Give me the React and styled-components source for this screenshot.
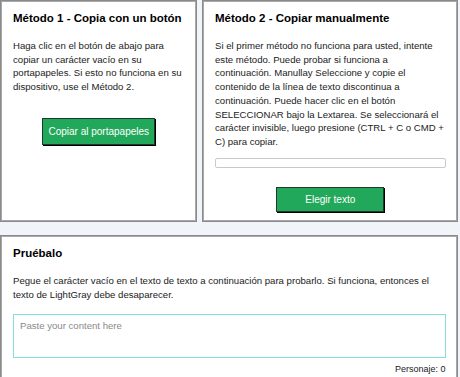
import React, { useState } from 'react';
import styled, { createGlobalStyle } from 'styled-components';

const GlobalStyle = createGlobalStyle`
  html, body {
    margin: 0;
    padding: 0;
    background: #f1f4f9;
    overflow: hidden;
  }
  body {
    font-family: "Liberation Sans", Arial, sans-serif;
    color: #111;
  }
`;

const PageStyle = styled.div`
  width: 458px;
  display: flex;
  flex-direction: column;
  gap: 13px;
`;

const TopRowStyle = styled.div`
  display: grid;
  grid-template-columns: 197px 256px;
  gap: 5px;
`;

const CardStyle = styled.div`
  background: #fff;
  border: 1px solid #8a8a8a;
  box-shadow: inset 0 0 0 1px #a8a8a8;
  padding: 10px 11.5px 9px 12px;
  display: flex;
  flex-direction: column;
`;

const CardTitleStyle = styled.h2`
  margin: 0 0 13px;
  font-size: 11.5px;
  line-height: 15px;
  font-weight: bold;
  color: #000;
`;

const TextStyle = styled.p`
  margin: 0;
  font-size: 9.6px;
  line-height: 13.7px;
  color: #222;
`;

const ButtonStyle = styled.button`
  align-self: center;
  margin-top: ${props => props.$top}px;
  height: ${props => props.$h}px;
  padding: 0 ${props => props.$pad}px;
  background: #22a85a;
  color: #fff;
  border: 1px solid #1d3b2a;
  box-shadow: 1px 1px 0 #000;
  font-family: "Liberation Sans", Arial, sans-serif;
  font-size: 10px;
  cursor: pointer;
`;

const LineInputStyle = styled.input`
  margin-top: 9px;
  height: 8px;
  padding: 0;
  border: 1px solid #c9c9c9;
  border-radius: 2px;
  outline: none;
`;

const TextAreaStyle = styled.textarea`
  display: block;
  box-sizing: border-box;
  width: 100%;
  height: 44px;
  margin-top: 12px;
  padding: 5px 6px;
  border: 1px solid #86dcd8;
  resize: none;
  outline: none;
  font-family: "Liberation Sans", Arial, sans-serif;
  font-size: 9.6px;
  color: #333;

  &::placeholder {
    color: #8a8a8a;
  }
`;

const CounterStyle = styled.div`
  margin-top: 6px;
  text-align: right;
  font-size: 9px;
  color: #222;
`;

export default function App() {
  const [text, setText] = useState('');

  return (
    <PageStyle>
      <GlobalStyle />
      <TopRowStyle>
        <CardStyle>
          <CardTitleStyle>Método 1 - Copia con un botón</CardTitleStyle>
          <TextStyle>
            Haga clic en el botón de abajo para copiar un carácter vacío en su portapapeles. Si esto no funciona en su dispositivo, use el Método 2.
          </TextStyle>
          <ButtonStyle $top={24} $h={27} $pad={5}>Copiar al portapapeles</ButtonStyle>
        </CardStyle>
        <CardStyle>
          <CardTitleStyle>Método 2 - Copiar manualmente</CardTitleStyle>
          <TextStyle>
            Si el primer método no funciona para usted, intente este método. Puede probar si funciona a continuación. Manullay Seleccione y copie el contenido de la línea de texto discontinua a continuación. Puede hacer clic en el botón SELECCIONAR bajo la Lextarea. Se seleccionará el carácter invisible, luego presione (CTRL + C o CMD + C) para copiar.
          </TextStyle>
          <LineInputStyle readOnly value="" />
          <ButtonStyle $top={19.5} $h={25} $pad={28}>Elegir texto</ButtonStyle>
        </CardStyle>
      </TopRowStyle>
      <CardStyle>
        <CardTitleStyle>Pruébalo</CardTitleStyle>
        <TextStyle>
          Pegue el carácter vacío en el texto de texto a continuación para probarlo. Si funciona, entonces el texto de LightGray debe desaparecer.
        </TextStyle>
        <TextAreaStyle
          placeholder="Paste your content here"
          value={text}
          onChange={e => setText(e.target.value)}
        />
        <CounterStyle>Personaje: {text.length}</CounterStyle>
      </CardStyle>
    </PageStyle>
  );
}
